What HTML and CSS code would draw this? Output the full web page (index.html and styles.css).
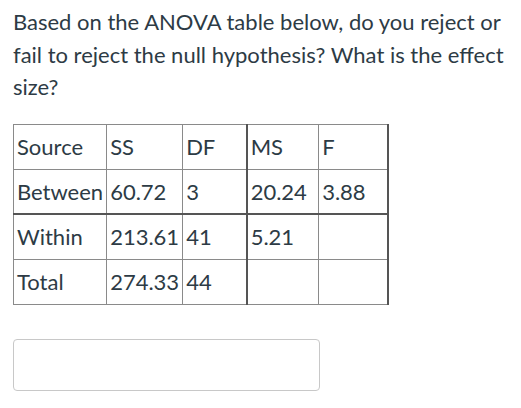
FILE: index.html
```html
<!DOCTYPE html>
<html>
<head>
<meta charset="utf-8">
<link rel="stylesheet" href="styles.css">
</head>
<body>
<div class="question">
  <p class="prompt">Based on the ANOVA table below, do you reject or fail to reject the null hypothesis? What is the effect size?</p>
  <table class="anova">
    <tr><td class="c1">Source</td><td class="c2">SS</td><td class="c3">DF</td><td class="c4 dk-left">MS</td><td class="c5 dk-right">F</td></tr>
    <tr class="dk-bottom"><td>Between</td><td>60.72</td><td>3</td><td class="dk-left">20.24</td><td class="dk-right">3.88</td></tr>
    <tr><td>Within</td><td>213.61</td><td>41</td><td class="dk-left">5.21</td><td class="dk-right"></td></tr>
    <tr><td>Total</td><td>274.33</td><td>44</td><td class="dk-left"></td><td class="dk-right"></td></tr>
  </table>
  <div class="answer"></div>
</div>
</body>
</html>
```
FILE: styles.css
```css
html, body {
  margin: 0;
  padding: 0;
  background: #fff;
}
.question {
  padding: 0 13px;
  font-family: Lato, "Open Sans", sans-serif;
  color: #2d3b45;
  font-size: 22px;
}
.prompt {
  margin: 0;
  padding-top: 6px;
  line-height: 32.5px;
}
.anova {
  border-collapse: collapse;
  margin-top: 20px;
  table-layout: fixed;
  font-size: 22px;
}
.anova td {
  border: 1px solid #8a8a8a;
  height: 45px;
  padding: 0 3px;
  box-sizing: border-box;
  white-space: nowrap;
  vertical-align: middle;
}
.c1 { width: 93px; }
.c2 { width: 76px; }
.c3 { width: 64px; }
.c4 { width: 72px; }
.c5 { width: 69px; }
.anova td.dk-left { border-left: 2px solid #555; }
.anova td.dk-right { border-right: 2px solid #555; }
.anova tr.dk-bottom td { border-bottom: 2px solid #555; }
.answer {
  margin-top: 34px;
  width: 307px;
  height: 52px;
  box-sizing: border-box;
  border: 1px solid #c8c8c8;
  border-radius: 4px;
}
```
